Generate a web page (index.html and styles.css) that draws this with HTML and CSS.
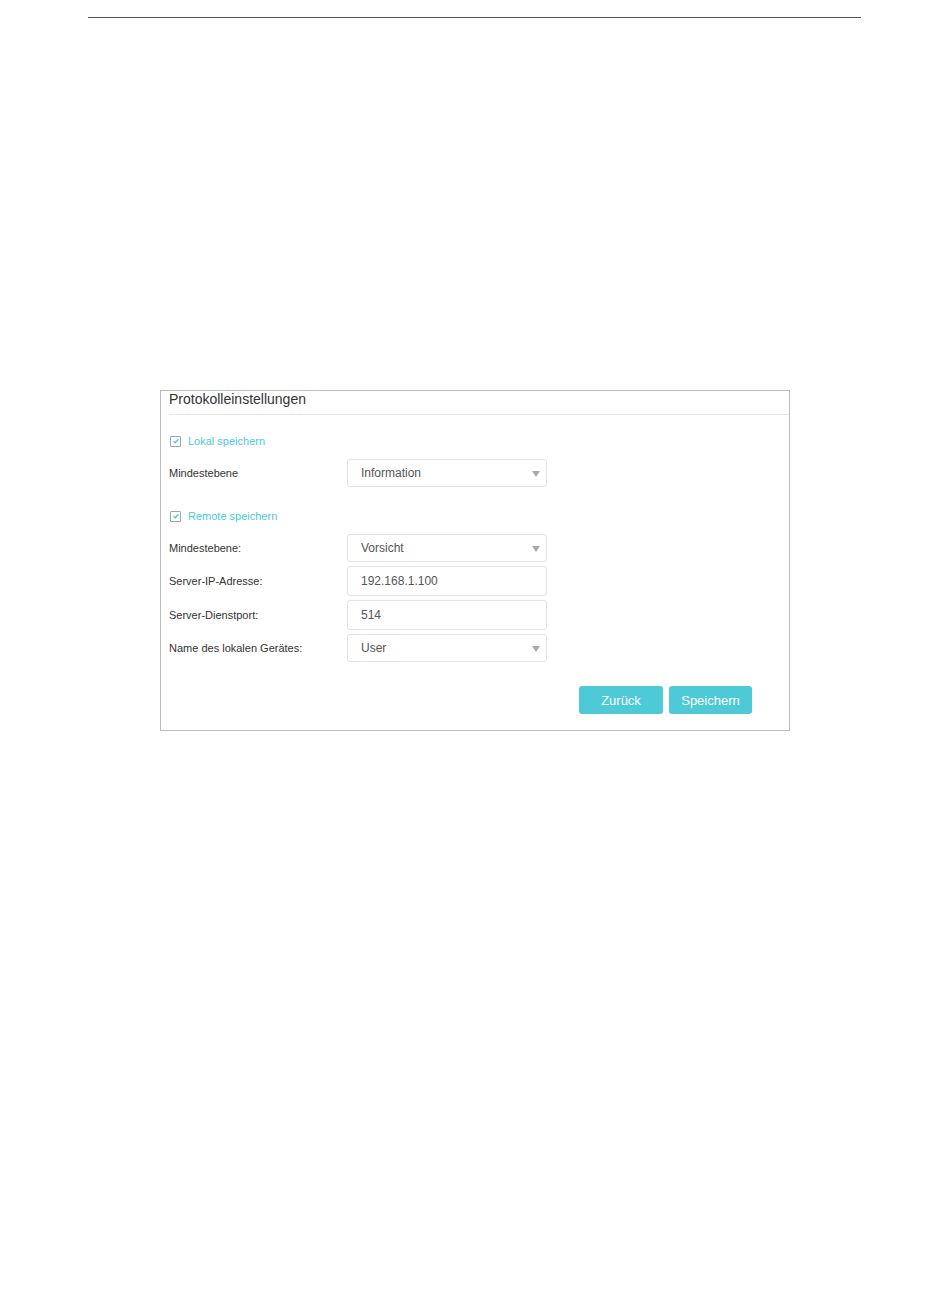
FILE: index.html
```html
<!DOCTYPE html>
<html lang="de">
<head>
<meta charset="utf-8">
<link rel="stylesheet" href="styles.css">
</head>
<body>
<div class="page">
  <hr class="rule">
  <div class="card">
    <div class="card-title">Protokolleinstellungen</div>
    <div class="card-body">
      <label class="check"><span class="box"><svg width="8" height="8" viewBox="0 0 8 8"><path d="M1.5 4.2 L3.2 5.8 L6.5 2.2" fill="none" stroke="#4acbd6" stroke-width="1.3"/></svg></span>Lokal speichern</label>
      <div class="row first">
        <span class="lbl">Mindestebene</span>
        <div class="field select">Information<span class="arrow"></span></div>
      </div>
      <label class="check second"><span class="box"><svg width="8" height="8" viewBox="0 0 8 8"><path d="M1.5 4.2 L3.2 5.8 L6.5 2.2" fill="none" stroke="#4acbd6" stroke-width="1.3"/></svg></span>Remote speichern</label>
      <div class="rows">
        <div class="row">
          <span class="lbl">Mindestebene:</span>
          <div class="field select">Vorsicht<span class="arrow"></span></div>
        </div>
        <div class="row">
          <span class="lbl">Server-IP-Adresse:</span>
          <div class="field tall">192.168.1.100</div>
        </div>
        <div class="row">
          <span class="lbl">Server-Dienstport:</span>
          <div class="field tall">514</div>
        </div>
        <div class="row">
          <span class="lbl">Name des lokalen Gerätes:</span>
          <div class="field select">User<span class="arrow"></span></div>
        </div>
      </div>
      <div class="actions">
        <button class="btn back">Zurück</button>
        <button class="btn save">Speichern</button>
      </div>
    </div>
  </div>
</div>
</body>
</html>
```
FILE: styles.css
```css
html, body {
  margin: 0;
  padding: 0;
  background: #fff;
  font-family: "Liberation Sans", Arial, sans-serif;
}
.page {
  width: 950px;
  height: 1297px;
  padding-top: 17px;
  box-sizing: border-box;
}
.rule {
  margin: 0 0 0 88px;
  width: 773px;
  border: 0;
  border-top: 1px solid #555;
  height: 0;
}
.card {
  margin: 372px 0 0 160px;
  width: 630px;
  height: 341px;
  box-sizing: border-box;
  border: 1px solid #bbb;
}
.card-title {
  margin-left: 8px;
  height: 23px;
  line-height: 17px;
  font-size: 14px;
  color: #333;
  border-bottom: 1px solid #e6e6e6;
}
.card-body {
  padding: 0 0 0 8px;
}
.check {
  display: flex;
  align-items: center;
  font-size: 11px;
  color: #4acbd6;
  height: 12px;
  margin-top: 20px;
}
.check.second {
  margin-top: 23px;
}
.box {
  width: 9px;
  height: 9px;
  border: 1px solid #9aa;
  border-radius: 1px;
  margin: 0 7px 0 1px;
  display: flex;
  align-items: center;
  justify-content: center;
}
.row {
  display: flex;
  align-items: center;
}
.row.first {
  margin-top: 12px;
}
.rows {
  margin-top: 12px;
  display: flex;
  flex-direction: column;
  gap: 4px;
}
.lbl {
  width: 178px;
  font-size: 11px;
  color: #333;
}
.field {
  position: relative;
  width: 200px;
  height: 28px;
  box-sizing: border-box;
  border: 1px solid #e3e3e3;
  border-radius: 3px;
  padding-left: 13px;
  font-size: 12px;
  color: #555;
  display: flex;
  align-items: center;
}
.field.tall {
  height: 30px;
}
.arrow {
  position: absolute;
  right: 6px;
  top: 11px;
  width: 0;
  height: 0;
  border-left: 4px solid transparent;
  border-right: 4px solid transparent;
  border-top: 6px solid #aaa;
}
.actions {
  display: flex;
  justify-content: flex-end;
  gap: 6px;
  margin-top: 24px;
  padding-right: 37px;
}
.btn {
  height: 28px;
  border: 0;
  border-radius: 3px;
  background: #4dcad5;
  color: #fff;
  font-family: "Liberation Sans", Arial, sans-serif;
  font-size: 13px;
  padding: 0;
}
.btn.back { width: 84px; }
.btn.save { width: 83px; }
```
